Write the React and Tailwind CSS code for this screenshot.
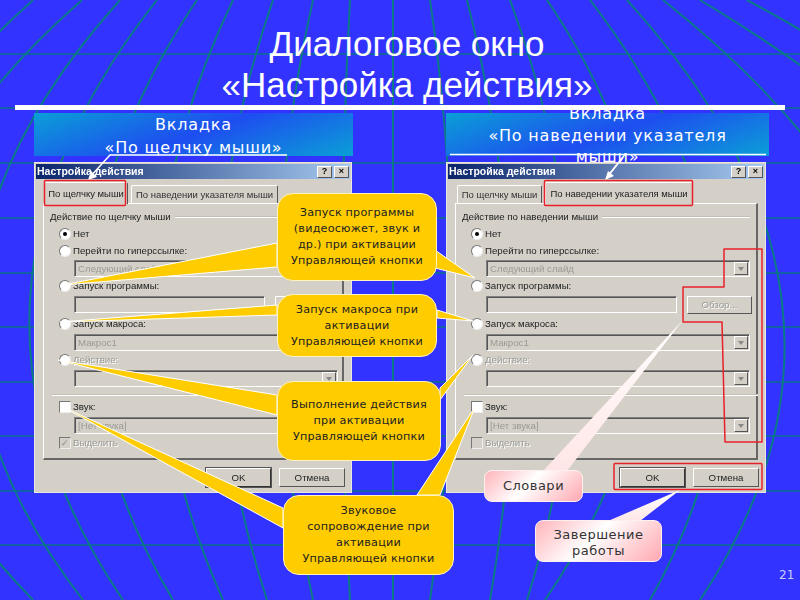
const horizontals = [54, 108, 163, 218, 273, 327, 382, 436, 491, 545];
const meridians = [
  [33, -300, -100], [82, -260, 33], [120, -150, 83], [157, -80, 123], [197, -5, 173], [233, 89, 223],
  [273, 169, 267], [313, 245, 313], [350, 334, 350], [393, 393, 393], [430, 474, 430], [467, 543, 490],
  [510, 621, 527], [547, 750, 545], [590, 820, 650], [627, 900, 700], [663, 1040, 830], [700, 1200, 1000], [747, 1300, 1100],
];

function Background() {
  return (
    <svg className="absolute inset-0" width="800" height="600" fill="none">
      {horizontals.map((y) => (
        <line key={y} x1="0" x2="800" y1={y} y2={y} stroke="#08708c" strokeWidth="1.5" />
      ))}
      {meridians.map(([a, c, b]) => (
        <path key={a} d={`M${a} 0 Q${c} 300 ${b} 600`} stroke="#0a7a86" strokeWidth="2" />
      ))}
    </svg>
  );
}

const bevelIn = "border border-t-[#808080] border-l-[#808080] border-r-white border-b-white shadow-[inset_1px_1px_0_#555]";
const bevelOut = "border border-t-white border-l-white border-r-[#555] border-b-[#555]";

function Radio({ on }) {
  return (
    <span className="w-[12px] h-[12px] rounded-full bg-white border border-t-[#777] border-l-[#777] border-r-[#eee] border-b-[#eee] flex items-center justify-center shrink-0">
      {on && <span className="w-[4px] h-[4px] rounded-full bg-black" />}
    </span>
  );
}

function Row({ icon, label, disabled, className = "" }) {
  return (
    <div className={`h-[16px] flex items-center pl-[24px] gap-[2px] ${className}`}>
      {icon}
      <span className={disabled ? "text-[#9a9a94] [text-shadow:1px_1px_0_#fff]" : "text-[#222]"}>{label}</span>
    </div>
  );
}

function Field({ text, arrow = true, className = "", width = "w-[264px]" }) {
  return (
    <div className={`h-[17px] ${width} ml-[39px] ${bevelIn} bg-[#d4d0c8] flex items-center justify-between pl-[3px] pr-[1px] text-[#9a9a94] ${className}`}>
      <span>{text}</span>
      {arrow && (
        <span className={`w-[14px] h-[13px] bg-[#d4d0c8] ${bevelOut} flex items-center justify-center`}>
          <span className="w-0 h-0 border-x-[3px] border-x-transparent border-t-[4px] border-t-[#888]" />
        </span>
      )}
    </div>
  );
}

function Check({ on, muted }) {
  return (
    <span className={`w-[12px] h-[12px] ${muted ? "bg-[#d4d0c8]" : "bg-white"} border border-t-[#777] border-l-[#777] border-r-[#eee] border-b-[#eee] flex items-center justify-center shrink-0 text-[#888] text-[9px] leading-none`}>
      {on ? "✓" : ""}
    </span>
  );
}

function Dialog({ first, width, group, checked }) {
  const active = "h-[22px] bg-[#d4d0c8] text-[#222] text-[9.5px] border-t border-l border-white border-r border-r-[#555] flex items-center justify-center rounded-t-[2px] whitespace-nowrap";
  const idle = "h-[18px] bg-[#d4d0c8] text-[#333] text-[9.5px] border-t border-l border-white border-r border-r-[#555] flex items-center justify-center rounded-t-[2px] whitespace-nowrap";
  return (
    <div className={`mt-[6px] h-[331px] ${width} bg-[#d4d0c8] border border-[#e8e6e0] p-[1px] text-[9.7px] leading-none font-['Liberation_Sans',sans-serif] blur-[0.5px]`}>
      <div className="h-[15px] bg-[linear-gradient(90deg,#0a246a,#a6caf0)] flex items-center justify-between pl-[1px] pr-[1px]">
        <span className="text-white font-bold text-[10.5px]">Настройка действия</span>
        <div className="flex gap-[2px]">
          <span className={`w-[15px] h-[12px] ${bevelOut} bg-[#d4d0c8] flex items-center justify-center text-[9px] font-bold text-black`}>?</span>
          <span className={`w-[15px] h-[12px] ${bevelOut} bg-[#d4d0c8] flex items-center justify-center text-[9px] font-bold text-black`}>×</span>
        </div>
      </div>
      <div className="h-[24px] flex items-end pl-[8px] gap-[3px]">
        {first ? (
          <>
            <div className={`${active} w-[84px] relative top-[1px]`}>По щелчку мыши</div>
            <div className={`${idle} w-[147px]`}>По наведении указателя мыши</div>
          </>
        ) : (
          <>
            <div className={`${idle} w-[85px] ml-[1px]`}>По щелчку мыши</div>
            <div className={`${active} w-[148px] relative top-[1px]`}>По наведении указателя мыши</div>
          </>
        )}
      </div>
      <div className="h-[257px] ml-[7px] mr-[6px] border-t border-l border-t-white border-l-white border-r-2 border-b-2 border-r-[#666] border-b-[#666] pt-[5px]">
        <div className="h-[16px] flex items-center gap-[4px] pl-[6px] pr-[6px] text-[#222]">
          <span className="whitespace-nowrap">{group}</span>
          <span className="flex-1 h-[2px] bg-[#c2beb4] border-b border-white" />
        </div>
        <div className="-ml-[9px]">
          <Row className="mt-[1px]" icon={<Radio on />} label="Нет" />
          <Row className="mt-[1px]" icon={<Radio />} label="Перейти по гиперссылке:" />
          <Field text="Следующий слайд" className="mt-[1px]" />
          <Row className="mt-[1px]" icon={<Radio />} label="Запуск программы:" />
          <div className="mt-[2px] flex items-start">
            <Field text="" arrow={false} width="w-[191px]" />
            <div className={`ml-[10px] h-[18px] w-[65px] ${bevelOut} bg-[#d4d0c8] text-[#9a9a94] flex items-center justify-center [text-shadow:1px_1px_0_#fff]`}>Обзор...</div>
          </div>
          <Row className="mt-[2px]" icon={<Radio />} label="Запуск макроса:" />
          <Field text="Макрос1" className="mt-[2px]" />
          <Row className="mt-[1px]" icon={<Radio />} label="Действие:" disabled />
          <Field text="" className="mt-[2px]" />
          <div className="mt-[7px] ml-[17px] mr-[-2px] h-[2px] bg-[#c2beb4] border-b border-white" />
          <Row className="mt-[3px]" icon={<Check />} label="Звук:" />
          <Field text="[Нет звука]" className="mt-[2px]" />
          <Row className="mt-[1px]" icon={<Check on={checked} muted />} label="Выделить" disabled />
        </div>
      </div>
      <div className="mt-[8px] mr-[5px] flex justify-end gap-[8px] text-[#222]">
        <div className="w-[65px] h-[19px] bg-[#d4d0c8] border border-t-white border-l-white border-r-[#333] border-b-[#333] outline outline-[#555] flex items-center justify-center">OK</div>
        <div className={`w-[66px] h-[19px] bg-[#d4d0c8] ${bevelOut} flex items-center justify-center`}>Отмена</div>
      </div>
    </div>
  );
}

function Overlay() {
  const yellow = [
    "277,243 277,267 63,285", "435,250 435,268 475,278",
    "277,305 277,315 60,322", "437,310 437,318 473,321",
    "277,395 277,415 58,360", "440,388 440,400 473,355",
    "283,508 283,528 63,407", "417,495 440,495 475,407",
  ];
  return (
    <svg className="absolute inset-0" width="800" height="600" fill="none">
      <defs>
        <linearGradient id="wh" x1="0" y1="0" x2="0" y2="1">
          <stop offset="0" stopColor="#ffffff" />
          <stop offset="1" stopColor="#ffe6e6" />
        </linearGradient>
      </defs>
      <path d="M287 155H110L90 177" stroke="#fff" strokeWidth="1.5" />
      <path d="M88 180l3-9 6 6z" fill="#fff" />
      <path d="M450 154.500H766" stroke="#fff" strokeWidth="1.500" />
      <path d="M623 157L608 176" stroke="#fff" strokeWidth="2" />
      <path d="M605 180l3-9 6 5z" fill="#fff" />
      <rect x="44.500" y="180.500" width="81" height="25" rx="1" stroke="#e8202a" strokeWidth="1.500" />
      <rect x="544.500" y="180.500" width="148" height="25" rx="1" stroke="#e8202a" strokeWidth="1.500" />
      <rect x="614" y="463.500" width="148" height="26" rx="1" stroke="#e8202a" strokeWidth="1.500" />
      <path d="M683 322V287H724V249H762V442H725L722 322Z" stroke="#e8202a" strokeWidth="1.500" strokeLinejoin="round" />
      {yellow.map((p) => (
        <polygon key={p} points={p} fill="#ffcc00" stroke="#fff" strokeWidth="1" strokeLinejoin="round" />
      ))}
      <polygon points="543,471 567,471 683,320" fill="url(#wh)" />
      <polygon points="608,521 640,521 680,490" fill="url(#wh)" />
    </svg>
  );
}

function Callout({ className, children }) {
  return (
    <div className={`absolute rounded-[16px] bg-[#ffcc00] border border-[#fff3c0] flex items-center justify-center text-center text-[11.2px] leading-[16px] tracking-[0.2px] text-[#222] font-['DejaVu_Sans',sans-serif] ${className}`}>
      <div>{children}</div>
    </div>
  );
}

function PinkBox({ className, children }) {
  return (
    <div className={`absolute rounded-[8px] bg-[linear-gradient(135deg,#ffb4ba,#ffffff_45%,#ffa8b0)] border border-[#fff0f0] flex items-center justify-center text-center text-[13px] leading-[16px] tracking-[0.5px] text-[#333] font-['DejaVu_Sans',sans-serif] ${className}`}>
      <div>{children}</div>
    </div>
  );
}

export default function App() {
  const headerBg = "h-[43px] bg-[linear-gradient(160deg,#0a9fd6_0%,#1e4df0_50%,#0a9fd6_100%)] flex items-center justify-center text-center text-white text-[16px] tracking-[0.8px] font-['DejaVu_Sans',sans-serif]";
  return (
    <div className="relative w-[800px] h-[600px] overflow-hidden bg-[#3333ff]">
      <Background />
      <div className="relative">
        <h1 className="pt-[23px] pl-[14px] text-center text-white text-[35px] leading-[41px] font-normal font-['Liberation_Sans',sans-serif]">
          Диалоговое окно
          <br />
          «Настройка действия»
        </h1>
        <div className="mx-[15px] h-[5px] bg-white" />
        <div className="mt-[3px] pl-[34px] flex gap-[93px]">
          <div className="w-[319px]">
            <div className={`${headerBg} leading-[23px] pt-[3px]`}>
              <div>
                Вкладка
                <br />
                «По щелчку мыши»
              </div>
            </div>
            <Dialog first width="w-[318px]" group="Действие по щелчку мыши" checked />
          </div>
          <div className="w-[323px]">
            <div className={`${headerBg} leading-[21.500px] pt-[2px]`}>
              <div>
                Вкладка
                <br />
                «По наведении указателя
                <br />
                мыши»
              </div>
            </div>
            <Dialog width="w-[320px]" group="Действие по наведении мыши" />
          </div>
        </div>
      </div>
      <Overlay />
      <Callout className="left-[277px] top-[193px] w-[160px] h-[88px]">
        Запуск программы
        <br />
        (видеосюжет, звук и
        <br />
        др.) при активации
        <br />
        Управляющей кнопки
      </Callout>
      <Callout className="left-[277px] top-[294px] w-[160px] h-[63px]">
        Запуск макроса при
        <br />
        активации
        <br />
        Управляющей кнопки
      </Callout>
      <Callout className="left-[277px] top-[381px] w-[164px] h-[80px]">
        Выполнение действия
        <br />
        при активации
        <br />
        Управляющей кнопки
      </Callout>
      <Callout className="left-[283px] top-[495px] w-[171px] h-[80px]">
        Звуковое
        <br />
        сопровождение при
        <br />
        активации
        <br />
        Управляющей кнопки
      </Callout>
      <PinkBox className="left-[484px] top-[470px] w-[99px] h-[32px]">Словари</PinkBox>
      <PinkBox className="left-[535px] top-[520px] w-[127px] h-[42px] pt-[3px]">
        Завершение
        <br />
        работы
      </PinkBox>
      <span className="absolute left-[779px] top-[568px] text-[12px] leading-[14px] text-[#c8d0ff] font-['DejaVu_Sans',sans-serif]">21</span>
    </div>
  );
}
